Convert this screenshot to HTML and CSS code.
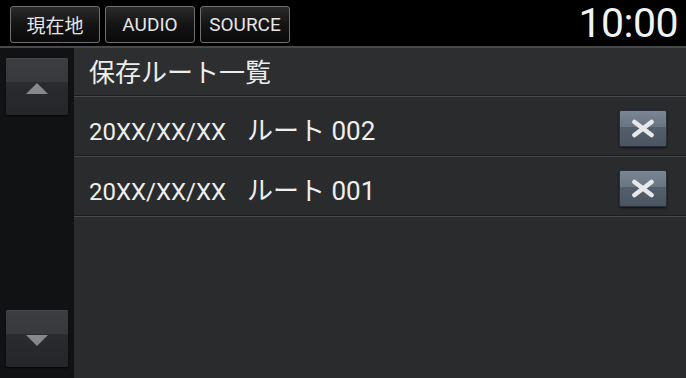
FILE: index.html
```html
<!DOCTYPE html>
<html lang="ja">
<head>
    <meta charset="UTF-8">
    <meta name="viewport" content="width=device-width, initial-scale=1.0">
    <title>保存ルート一覧</title>
    <link rel="stylesheet" href="styles.css">
</head>
<body>
    <div class="screen">
        <div class="topbar">
            <button class="top-btn">現在地</button>
            <button class="top-btn">AUDIO</button>
            <button class="top-btn">SOURCE</button>
            <div class="clock">10:00</div>
        </div>
        <div class="content">
            <div class="scroller">
                <button class="scroll-btn"><span class="tri-up"></span></button>
                <button class="scroll-btn"><span class="tri-down"></span></button>
            </div>
            <div class="list">
                <div class="list-title">保存ルート一覧</div>
                <div class="list-row">
                    <span class="route-name">20XX/XX/XX<span class="route-label">ルート 002</span></span>
                    <button class="del-btn">
                        <svg width="24" height="19" viewBox="0 0 24 19"><path d="M3.5 3 L20.5 16 M20.5 3 L3.5 16" stroke="#e6e8ea" stroke-width="4.6" stroke-linecap="round"/></svg>
                    </button>
                </div>
                <div class="list-row">
                    <span class="route-name">20XX/XX/XX<span class="route-label">ルート 001</span></span>
                    <button class="del-btn">
                        <svg width="24" height="19" viewBox="0 0 24 19"><path d="M3.5 3 L20.5 16 M20.5 3 L3.5 16" stroke="#e6e8ea" stroke-width="4.6" stroke-linecap="round"/></svg>
                    </button>
                </div>
            </div>
        </div>
    </div>
</body>
</html>
```

FILE: styles.css
```css
body {
    margin: 0;
    padding: 0;
    background: #000;
    font-family: Roboto, "Noto Sans CJK JP", sans-serif;
    color: #eceded;
}
.screen {
    width: 686px;
    height: 378px;
    display: flex;
    flex-direction: column;
    overflow: hidden;
}
.topbar {
    height: 46px;
    background: #000;
    border-bottom: 2px solid #48494b;
    display: flex;
    align-items: center;
    padding-left: 10px;
    gap: 5px;
    flex-shrink: 0;
}
.top-btn {
    width: 90px;
    height: 37px;
    margin-top: 2px;
    border: 1px solid #707070;
    border-radius: 3px;
    background: linear-gradient(#2b2b2b, #141414 50%, #0a0a0a);
    color: #e6e6e6;
    font-family: Roboto, "Noto Sans CJK JP", sans-serif;
    font-size: 19px;
    padding: 0;
}
.clock {
    margin-left: auto;
    padding-right: 8px;
    font-size: 41px;
    line-height: 46px;
    color: #f2f2f2;
    letter-spacing: -0.5px;
}
.content {
    flex: 1;
    display: flex;
}
.scroller {
    width: 74px;
    background: #111214;
    display: flex;
    flex-direction: column;
    justify-content: space-between;
    padding: 10px 6px 11px;
    box-sizing: border-box;
}
.scroll-btn {
    width: 62px;
    height: 57px;
    border: none;
    border-radius: 2px;
    padding: 4px 0 0;
    background: linear-gradient(#3c3d40, #38393c 42%, #2a2b2e 43%, #252629);
    box-shadow: 0 1px 2px #050506, inset 0 1px 0 #48494c;
    display: flex;
    align-items: center;
    justify-content: center;
}
.tri-up {
    width: 0;
    height: 0;
    border-left: 11px solid transparent;
    border-right: 11px solid transparent;
    border-bottom: 11px solid #87888b;
}
.tri-down {
    width: 0;
    height: 0;
    border-left: 11px solid transparent;
    border-right: 11px solid transparent;
    border-top: 11px solid #87888b;
}
.list {
    flex: 1;
    background: #2a2b2d;
}
.list-title {
    height: 44px;
    line-height: 44px;
    padding: 3px 0 0 15px;
    font-size: 26px;
    background: #2d2e30;
    border-bottom: 1px solid #1c1d1f;
    box-shadow: 0 1px 0 #47484b;
    margin-bottom: 1px;
}
.list-row {
    height: 53px;
    display: flex;
    align-items: center;
    justify-content: space-between;
    padding: 5px 19px 0 15px;
    border-bottom: 1px solid #1c1d1f;
    box-shadow: 0 1px 0 #47484b;
    margin-bottom: 1px;
}
.route-name {
    font-size: 24px;
    color: #eeefef;
}
.route-label {
    margin-left: 21px;
    font-size: 26px;
}
.del-btn {
    width: 48px;
    height: 37px;
    padding: 0;
    border: 1px solid #2a3038;
    border-radius: 2px;
    background: linear-gradient(#7a8693, #6a7582 45%, #555f6c 47%, #4b5561);
    box-shadow: 0 1px 2px #111;
    display: flex;
    align-items: center;
    justify-content: center;
}
```
